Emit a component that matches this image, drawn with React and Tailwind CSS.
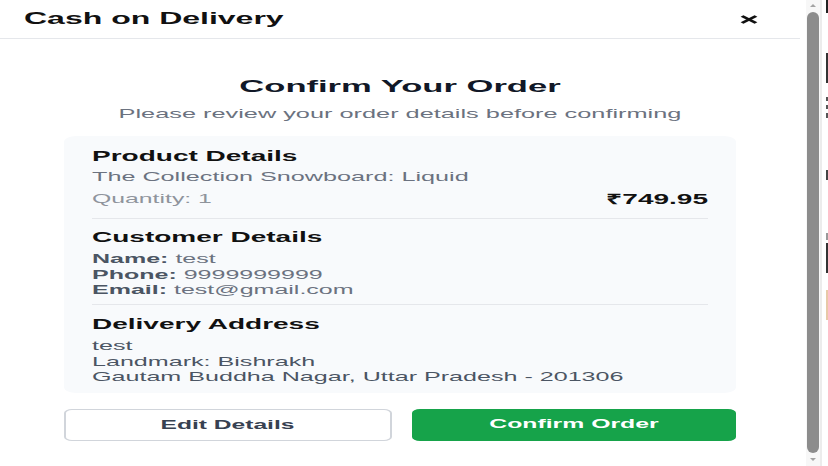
export default function App() {
  return (
    <div className="w-[828px] h-[466px] overflow-hidden bg-white flex font-['Liberation_Sans',Arial,sans-serif]">
      <div className="w-[800px] h-[466px] shrink-0">
        <div className="w-[400px] origin-top-left scale-x-200 bg-white">
          <div className="flex items-center justify-between h-[39px] pl-[12px] pr-[21.5px] border-b border-[#e5e7eb]">
            <span className="text-[16px] leading-[20px] font-bold text-[#111]">Cash on Delivery</span>
            <svg width="9" height="9" viewBox="0 0 9 9">
              <path d="M1 1L8 8M8 1L1 8" stroke="#111" strokeWidth="2" />
            </svg>
          </div>
          <div className="px-[32px]">
            <h2 className="mt-[36px] text-center text-[17.3px] leading-[22px] font-bold text-[#111827]">Confirm Your Order</h2>
            <p className="mt-[9px] text-center text-[12.66px] leading-[16px] text-[#6b7280]">
              Please review your order details before confirming
            </p>
            <div className="mt-[14px] rounded-[6px] bg-[#f8fafc] px-[14px] pt-[10px] pb-[7.5px]">
              <h3 className="text-[14px] leading-[20px] font-bold text-[#111]">Product Details</h3>
              <p className="mt-[1px] text-[12.6px] leading-[20px] text-[#6b7280]">The Collection Snowboard: Liquid</p>
              <div className="mt-[2.5px] flex items-center justify-between h-[20px]">
                <span className="text-[12.4px] text-[#8f949c]">Quantity: 1</span>
                <span className="text-[14px] font-bold text-[#111]">₹749.95</span>
              </div>
              <div className="mt-[8.5px] h-px bg-[#e5e7eb]" />
              <h3 className="mt-[8px] text-[14px] leading-[20px] font-bold text-[#111]">Customer Details</h3>
              <div className="mt-[5px] text-[12.5px] leading-[15.5px] text-[#6b7280]">
                <p><span className="font-bold text-[#4b5563]">Name:</span> test</p>
                <p><span className="font-bold text-[#4b5563]">Phone:</span> 9999999999</p>
                <p><span className="font-bold text-[#4b5563]">Email:</span> test@gmail.com</p>
              </div>
              <div className="mt-[5.5px] h-px bg-[#e5e7eb]" />
              <h3 className="mt-[9px] text-[14px] leading-[20px] font-bold text-[#111]">Delivery Address</h3>
              <div className="mt-[5px] text-[12.55px] leading-[15.5px] text-[#4b5563]">
                <p>test</p>
                <p>Landmark: Bishrakh</p>
                <p>Gautam Buddha Nagar, Uttar Pradesh - 201306</p>
              </div>
            </div>
            <div className="mt-[16px] flex gap-[10.5px]">
              <button className="w-[163.5px] h-[31.5px] rounded-[4px] border-[1.5px] border-[#d1d5db] bg-white text-[12.3px] font-bold text-[#374151]">
                Edit Details
              </button>
              <button className="flex-1 h-[31.5px] rounded-[4px] bg-[#16a34a] text-[12.4px] font-bold text-white">
                Confirm Order
              </button>
            </div>
            <div className="h-[40px]" />
          </div>
        </div>
      </div>
      <div className="w-[6px] shrink-0 bg-white" />
      <div className="w-[14px] shrink-0 h-[466px] bg-[#f7f7f7] flex flex-col items-center">
        <svg width="10" height="12" viewBox="0 0 10 12" className="shrink-0">
          <path d="M2 7L5 4L8 7Z" fill="#a3a3a3" />
        </svg>
        <div className="w-[12px] h-[441px] rounded-full bg-[#8c8c8c] shrink-0" />
        <svg width="10" height="13" viewBox="0 0 10 13" className="shrink-0">
          <path d="M2 5L5 8L8 5Z" fill="#a3a3a3" />
        </svg>
      </div>
      <div className="w-[2px] shrink-0 bg-[#ececec]" />
      <div className="flex-1 h-[466px] flex flex-col items-end">
        <div className="w-[2px] h-[13px] bg-[#222]" />
        <div className="h-[40px]" />
        <div className="w-[2px] h-[30px] bg-[#333]" />
        <div className="h-[14px]" />
        <div className="w-[2px] h-[4px] bg-[#555]" />
        <div className="h-[4px]" />
        <div className="w-[2px] h-[4px] bg-[#555]" />
        <div className="h-[4px]" />
        <div className="w-[2px] h-[5px] bg-[#555]" />
        <div className="h-[52px]" />
        <div className="w-[2px] h-[10px] bg-[#444]" />
        <div className="h-[53px]" />
        <div className="w-[2px] h-[7px] bg-[#999]" />
        <div className="h-[3px]" />
        <div className="w-[2px] h-[30px] bg-[#333]" />
        <div className="h-[17px]" />
        <div className="w-[2px] h-[30px] bg-[#e8c9a8]" />
      </div>
    </div>
  );
}
